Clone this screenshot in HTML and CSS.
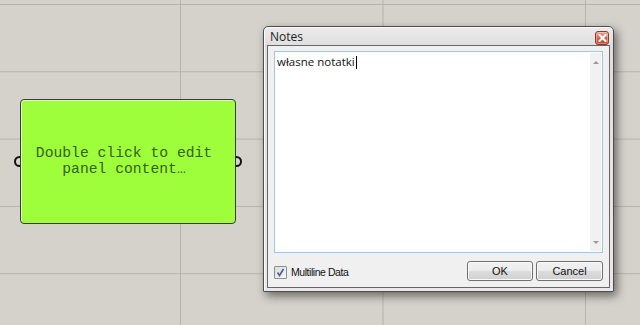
FILE: index.html
```html
<!DOCTYPE html>
<html>
<head>
    <meta charset="UTF-8">
    <meta name="viewport" content="width=device-width, initial-scale=1.0">
    <link rel="stylesheet" href="styles.css">
</head>
<body>
    <div class="canvas">
        <span class="port port-in"></span>
        <span class="port port-out"></span>
        <div class="panel">
            <div class="panel-text">Double click to edit<br>panel content…</div>
        </div>

        <div class="dialog">
            <div class="titlebar">
                <span class="title">Notes</span>
                <span class="close">
                    <svg width="9" height="8" viewBox="0 0 9 8"><path d="M1.5 1 L7.5 7 M7.5 1 L1.5 7" stroke="#fff" stroke-width="2" stroke-linecap="square"/></svg>
                </span>
            </div>
            <div class="client">
                <div class="editor">
                    <div class="editor-text">własne notatki<span class="caret"></span></div>
                    <div class="scrollbar">
                        <span class="arrow arrow-up"></span>
                        <span class="arrow arrow-down"></span>
                    </div>
                </div>
                <div class="footer">
                    <label class="check">
                        <span class="check-box">
                            <svg width="9" height="9" viewBox="0 0 9 9"><path d="M1.5 4.5 L3.5 7.5 L7.5 1" fill="none" stroke="#4a5f97" stroke-width="1.6"/></svg>
                        </span>
                        Multiline Data
                    </label>
                    <div class="buttons">
                        <button class="btn">OK</button>
                        <button class="btn">Cancel</button>
                    </div>
                </div>
            </div>
        </div>
    </div>
</body>
</html>
```

FILE: styles.css
```css
html, body {
    margin: 0;
    padding: 0;
}
body {
    width: 640px;
    height: 325px;
    overflow: hidden;
}

/* grasshopper canvas */
.canvas {
    position: relative;
    z-index: 0;
    width: 640px;
    height: 325px;
    background-color: #d5d1cb;
    background-image:
        linear-gradient(to right, #b6b2ac 1px, transparent 1px),
        linear-gradient(to bottom, #b6b2ac 1px, transparent 1px);
    background-size: 202.5px 100%, 100% 67.3px;
    background-position: 180px 0, 0 4px;
}

/* panel component */
.panel {
    position: absolute;
    left: 20px;
    top: 99px;
    width: 216px;
    height: 125px;
    box-sizing: border-box;
    border: 1px solid #3a3a3a;
    border-radius: 4px;
    background-color: #9efe3b;
    box-shadow: inset 1px 1px 0 #d8ffb8;
    display: flex;
    align-items: center;
    justify-content: center;
    padding-right: 8px;
}
.panel-text {
    font-family: "Liberation Mono", "Courier New", monospace;
    font-size: 14.7px;
    line-height: 16px;
    color: #35621a;
    text-align: center;
    margin-top: -1px;
}
.port {
    position: absolute;
    z-index: -1;
    width: 7px;
    height: 7px;
    border: 2px solid #111;
    border-radius: 50%;
    top: 156px;
}
.port-in {
    left: 14px;
}
.port-out {
    left: 231px;
}

/* notes dialog */
.dialog {
    position: absolute;
    left: 263px;
    top: 26px;
    width: 351px;
    height: 266px;
    box-sizing: border-box;
    border: 1px solid #4d4d4d;
    border-radius: 5px 5px 1px 1px;
    background: linear-gradient(to bottom, #ebebeb, #dedede 20px, #e9e9e9);
    box-shadow: 3px 4px 10px rgba(0, 0, 0, 0.5), inset 1px 1px 0 #fafafa;
    display: flex;
    flex-direction: column;
}
.titlebar {
    height: 19px;
    display: flex;
    align-items: center;
    justify-content: space-between;
    padding: 0 4px 0 6px;
}
.title {
    font-family: "Open Sans", "Liberation Sans", sans-serif;
    font-size: 12px;
    color: #1e1e1e;
    margin-top: 1px;
}
.close {
    width: 12px;
    height: 12px;
    border: 1px solid #8a3a2c;
    border-radius: 3px;
    background: linear-gradient(to bottom, #eba493, #d9664d 50%, #c5452b);
    box-shadow: inset 0 0 0 1px rgba(255, 255, 255, 0.35);
    display: flex;
    align-items: center;
    justify-content: center;
    margin-top: 4px;
}
.client {
    flex: 1;
    margin: 0 3px 3px 3px;
    border: 1px solid #676767;
    background-color: #f0f0f0;
    padding: 5px 6px 6px 6px;
    display: flex;
    flex-direction: column;
    gap: 8px;
}
.editor {
    height: 202px;
    box-sizing: border-box;
    border: 1px solid #a4c4e3;
    background-color: #fff;
    display: flex;
}
.editor-text {
    flex: 1;
    padding: 2px 2px;
    font-family: "Open Sans", "Liberation Sans", sans-serif;
    font-size: 11.5px;
    line-height: 15px;
    color: #111;
}
.caret {
    display: inline-block;
    width: 1px;
    height: 13px;
    background-color: #000;
    vertical-align: -3px;
    margin-left: 1px;
}
.scrollbar {
    width: 11px;
    margin: 1px 1px 1px 0;
    background-color: #f1f1f1;
    display: flex;
    flex-direction: column;
    justify-content: space-between;
    align-items: center;
    padding: 8px 0 7px;
}
.arrow {
    width: 0;
    height: 0;
    border-left: 3px solid transparent;
    border-right: 3px solid transparent;
}
.arrow-up {
    border-bottom: 3px solid #9a9a9a;
}
.arrow-down {
    border-top: 3px solid #9a9a9a;
}

.footer {
    display: flex;
    align-items: center;
    justify-content: space-between;
}
.check {
    display: flex;
    align-items: center;
    gap: 4px;
    font-family: "Liberation Sans", sans-serif;
    font-size: 10.5px;
    letter-spacing: -0.45px;
    color: #111;
    margin-top: 2px;
}
.check-box {
    width: 11px;
    height: 11px;
    border: 1px solid #8f8f8f;
    border-radius: 1px;
    background: linear-gradient(135deg, #dcdcdc, #f6f6f6);
    display: flex;
    align-items: center;
    justify-content: center;
}
.buttons {
    display: flex;
    gap: 3px;
}
.btn {
    width: 67px;
    height: 20px;
    border: 1px solid #707070;
    border-radius: 3px;
    background: linear-gradient(to bottom, #f2f2f2, #ebebeb 50%, #dddddd 50%, #cfcfcf);
    box-shadow: inset 0 0 0 1px #fbfbfb;
    font-family: "Liberation Sans", sans-serif;
    font-size: 11px;
    color: #111;
    padding: 0;
}
.btn:first-child {
    width: 66px;
}
```
